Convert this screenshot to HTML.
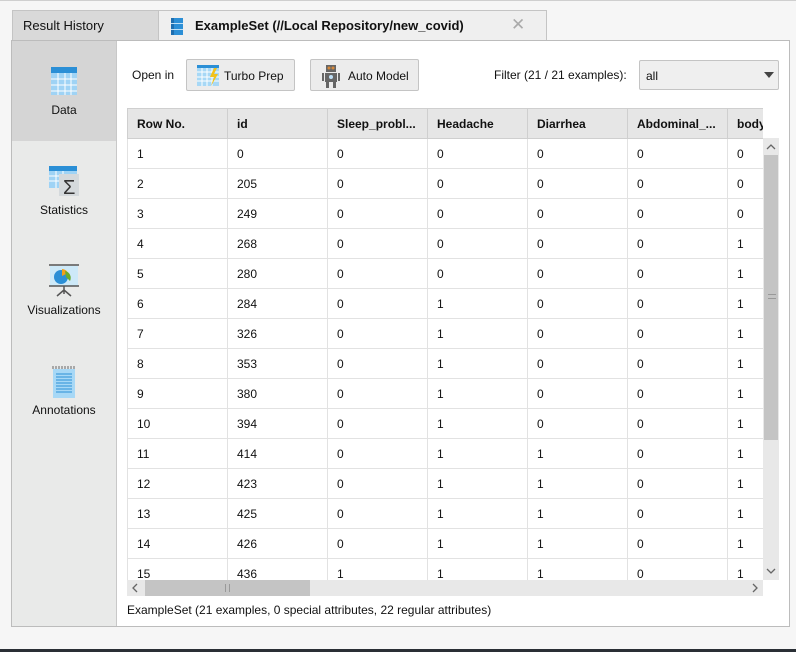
<!DOCTYPE html>
<html><head><style>
*{box-sizing:border-box;margin:0;padding:0}
body{width:796px;height:652px;background:#f6f6f6;font-family:"Liberation Sans",Arial,sans-serif;font-size:12px;color:#111;position:relative;overflow:hidden}
.abs{position:absolute}
.tab1{left:12px;top:10px;width:147px;height:31px;background:#d9d9d9;border:1px solid #c4c4c4;border-bottom:none;padding:7px 10px;font-size:13px}
.tab2{left:158px;top:10px;width:389px;height:31px;background:#efefef;border:1px solid #c4c4c4;border-bottom:none;font-size:13px;font-weight:bold}
.main{left:11px;top:40px;width:779px;height:587px;border:1px solid #bcbcbc;background:#fff}
.side{left:12px;top:41px;width:105px;height:585px;background:#e9eae9;border-right:1px solid #c8c8c8}
.si{position:absolute;left:0;width:104px;text-align:center;font-size:12px}
.btn{position:absolute;height:32px;top:59px;border:1px solid #c4c4c4;border-radius:2px;background:#ececec;font-size:12px}
table{border-collapse:collapse;table-layout:fixed;position:absolute;left:127px;top:108px}
td,th{height:30px;border:1px solid #e2e2e2;text-align:left;padding-left:9px;white-space:nowrap;overflow:hidden;font-size:12px}
th{background:#e6e6e6;border-color:#cfcfcf;font-weight:bold}
td{background:#fff}
</style></head><body>
<div class="abs" style="left:0;top:0;width:796px;height:1px;background:#cfcfcf"></div>
<div class="abs tab1">Result History</div>
<div class="abs tab2">
 <div class="abs" style="left:12px;top:7px;width:12px;height:17px;background:#2c8fd6;border-left:3px solid #1f6fb0"></div>
 <div class="abs" style="left:12px;top:12px;width:12px;height:1px;background:#bfe0f7"></div>
 <div class="abs" style="left:12px;top:18px;width:12px;height:1px;background:#bfe0f7"></div>
 <span class="abs" style="left:36px;top:7px">ExampleSet (//Local Repository/new_covid)</span>
 <span class="abs" style="left:352px;top:4px;font-weight:normal;font-size:17px;color:#aaa">✕</span>
</div>
<div class="abs main"></div>
<div class="abs side">
 <div class="abs" style="left:0;top:0;width:104px;height:100px;background:#d5d5d5"></div>
 <div class="si" style="top:25px"><svg width="28" height="30" viewBox="0 0 28 30"><rect x="1" y="1" width="26" height="28" fill="#9fd3f5"/><rect x="1" y="1" width="26" height="6" fill="#2b8fd6"/><g stroke="#fff" stroke-width="1"><path d="M1 13H27M1 19H27M1 25H27M8 7V29M15 7V29M21 7V29"/></g></svg></div>
 <div class="si" style="top:62px">Data</div>
 <div class="si" style="top:124px"><svg width="34" height="32" viewBox="0 0 34 32"><rect x="2" y="1" width="28" height="22" fill="#9fd3f5"/><rect x="2" y="1" width="28" height="5" fill="#2b8fd6"/><g stroke="#fff"><path d="M2 11H30M2 16H30M9 6V23M16 6V23"/></g><rect x="12" y="9" width="20" height="22" fill="#d4d9dc"/><text x="16" y="29" font-size="20" font-family="Liberation Sans" fill="#333">Σ</text></svg></div>
 <div class="si" style="top:162px">Statistics</div>
 <div class="si" style="top:223px"><svg width="32" height="34" viewBox="0 0 32 34"><path d="M1 1H31" stroke="#555" stroke-width="1.5"/><rect x="2" y="2" width="28" height="20" fill="#cde9f8"/><path d="M1 22H31M16 22V30M16 26L9 32M16 26L23 32" stroke="#555" stroke-width="1.5"/><circle cx="13" cy="13" r="7" fill="#2b8fd6"/><path d="M14 12V5A7 7 0 0 1 20 9Z" fill="#f2a11b"/><path d="M17 7A7 7 0 0 1 22 17L18 13Z" fill="#6aab2e"/></svg></div>
 <div class="si" style="top:262px">Visualizations</div>
 <div class="si" style="top:324px"><svg width="26" height="34" viewBox="0 0 26 34"><path d="M2 1V4M5 1V4M8 1V4M11 1V4M14 1V4M17 1V4M20 1V4M23 1V4" stroke="#666"/><rect x="2" y="4" width="22" height="29" fill="#a7d8f6"/><g stroke="#2b8fd6"><path d="M5 9H21M5 12H21M5 15H21M5 18H21M5 21H21M5 24H21M5 27H21"/></g></svg></div>
 <div class="si" style="top:362px">Annotations</div>
</div>
<span class="abs" style="left:132px;top:68px">Open in</span>
<div class="btn" style="left:186px;width:109px"><svg class="abs" style="left:9px;top:4px" width="24" height="23" viewBox="0 0 24 23"><rect x="1" y="1" width="22" height="21" fill="#a7d8f6"/><rect x="1" y="1" width="22" height="3" fill="#2b8fd6"/><g stroke="#fff"><path d="M1 8H23M1 13H23M1 17H23M6 4V22M11 4V22M16 4V22"/></g><path d="M18 4L14 13H18L15 22L22 10H18L21 4Z" fill="#f3c21b"/></svg><span class="abs" style="left:37px;top:9px">Turbo Prep</span></div>
<div class="btn" style="left:310px;width:109px"><svg class="abs" style="left:11px;top:4px" width="18" height="24" viewBox="0 0 18 24"><rect x="4" y="1" width="10" height="7" fill="#666"/><circle cx="7" cy="4" r="1.5" fill="#d7883a"/><circle cx="11" cy="4" r="1.5" fill="#d7883a"/><rect x="3" y="9" width="12" height="9" fill="#666"/><circle cx="9" cy="13" r="2" fill="#bfe0f7"/><rect x="0" y="9" width="2" height="8" fill="#666"/><rect x="16" y="9" width="2" height="8" fill="#666"/><rect x="4" y="18" width="3" height="6" fill="#666"/><rect x="11" y="18" width="3" height="6" fill="#666"/></svg><span class="abs" style="left:37px;top:9px">Auto Model</span></div>
<span class="abs" style="left:494px;top:68px">Filter (21 / 21 examples):</span>
<div class="abs" style="left:639px;top:60px;width:140px;height:30px;border:1px solid #c4c4c4;border-radius:2px;background:#efefef"><span class="abs" style="left:6px;top:8px">all</span><svg class="abs" style="left:124px;top:10px" width="10" height="8" viewBox="0 0 10 8"><path d="M0 1H10L5 7Z" fill="#444"/></svg></div>
<div class="abs" style="left:127px;top:108px;width:636px;height:472px;overflow:hidden">
<table style="left:0;top:0;width:700px">
<colgroup><col style="width:100px"><col style="width:100px"><col style="width:100px"><col style="width:100px"><col style="width:100px"><col style="width:100px"><col style="width:100px"></colgroup>
<tr><th>Row No.</th><th>id</th><th>Sleep_probl...</th><th>Headache</th><th>Diarrhea</th><th>Abdominal_...</th><th>body</th></tr>
<tr><td>1</td><td>0</td><td>0</td><td>0</td><td>0</td><td>0</td><td>0</td></tr>
<tr><td>2</td><td>205</td><td>0</td><td>0</td><td>0</td><td>0</td><td>0</td></tr>
<tr><td>3</td><td>249</td><td>0</td><td>0</td><td>0</td><td>0</td><td>0</td></tr>
<tr><td>4</td><td>268</td><td>0</td><td>0</td><td>0</td><td>0</td><td>1</td></tr>
<tr><td>5</td><td>280</td><td>0</td><td>0</td><td>0</td><td>0</td><td>1</td></tr>
<tr><td>6</td><td>284</td><td>0</td><td>1</td><td>0</td><td>0</td><td>1</td></tr>
<tr><td>7</td><td>326</td><td>0</td><td>1</td><td>0</td><td>0</td><td>1</td></tr>
<tr><td>8</td><td>353</td><td>0</td><td>1</td><td>0</td><td>0</td><td>1</td></tr>
<tr><td>9</td><td>380</td><td>0</td><td>1</td><td>0</td><td>0</td><td>1</td></tr>
<tr><td>10</td><td>394</td><td>0</td><td>1</td><td>0</td><td>0</td><td>1</td></tr>
<tr><td>11</td><td>414</td><td>0</td><td>1</td><td>1</td><td>0</td><td>1</td></tr>
<tr><td>12</td><td>423</td><td>0</td><td>1</td><td>1</td><td>0</td><td>1</td></tr>
<tr><td>13</td><td>425</td><td>0</td><td>1</td><td>1</td><td>0</td><td>1</td></tr>
<tr><td>14</td><td>426</td><td>0</td><td>1</td><td>1</td><td>0</td><td>1</td></tr>
<tr><td>15</td><td>436</td><td>1</td><td>1</td><td>1</td><td>0</td><td>1</td></tr>
</table></div>
<div class="abs" style="left:763px;top:138px;width:16px;height:442px;background:#e8e8e8"></div>
<div class="abs" style="left:764px;top:155px;width:14px;height:285px;background:#c4c4c4"></div>
<div class="abs" style="left:768px;top:294px;width:8px;height:5px;border-top:1px solid #999;border-bottom:1px solid #999"></div>
<svg class="abs" style="left:765px;top:142px" width="12" height="10" viewBox="0 0 12 10"><path d="M2 7L6 3L10 7" stroke="#666" fill="none" stroke-width="1.3"/></svg>
<svg class="abs" style="left:765px;top:566px" width="12" height="10" viewBox="0 0 12 10"><path d="M2 3L6 7L10 3" stroke="#666" fill="none" stroke-width="1.3"/></svg>
<div class="abs" style="left:127px;top:580px;width:636px;height:16px;background:#e8e8e8"></div>
<div class="abs" style="left:145px;top:580px;width:165px;height:16px;background:#c4c4c4"></div>
<div class="abs" style="left:225px;top:584px;width:5px;height:8px;border-left:1px solid #999;border-right:1px solid #999"></div>
<svg class="abs" style="left:130px;top:582px" width="10" height="12" viewBox="0 0 10 12"><path d="M7 2L3 6L7 10" stroke="#666" fill="none" stroke-width="1.3"/></svg>
<svg class="abs" style="left:750px;top:582px" width="10" height="12" viewBox="0 0 10 12"><path d="M3 2L7 6L3 10" stroke="#666" fill="none" stroke-width="1.3"/></svg>
<span class="abs" style="left:127px;top:603px">ExampleSet (21 examples, 0 special attributes, 22 regular attributes)</span>
<div class="abs" style="left:0;top:649px;width:796px;height:3px;background:#2a2f35"></div>
</body></html>
